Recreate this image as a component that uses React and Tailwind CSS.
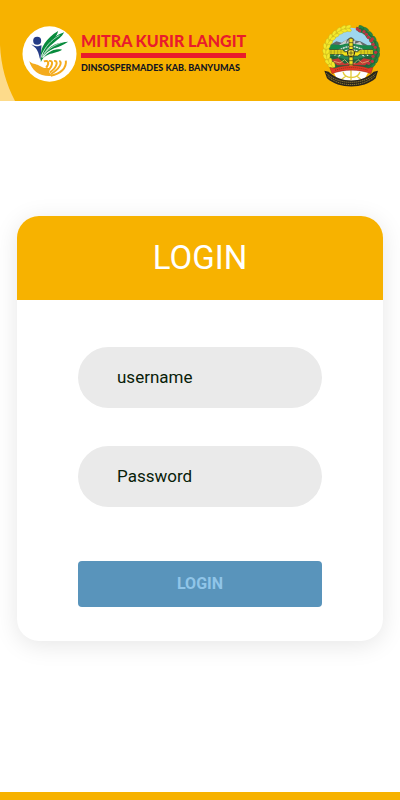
import { useState } from 'react';

const GRAINS = [
  [118, 40, 85], [104, 42, 72], [91, 48, 60], [78, 57, 48], [67, 67, 36], [58, 80, 24],
  [51, 93, 12], [49, 108, 0], [51, 123, -9], [57, 138, -22], [66, 150, -34],
];

const BERRIES = [
  [143, 42], [150, 47], [163, 50], [170, 58], [176, 67], [184, 77], [188, 72], [190, 88],
  [197, 97], [198, 112], [190, 124], [188, 139], [177, 145],
];

const LEAVES = [
  [153, 42, 25], [166, 48, 35], [178, 60, 50], [189, 74, 62], [196, 89, 75], [200, 104, 88],
  [200, 119, 102], [195, 134, 116], [186, 147, 135],
];

function SocialLogo() {
  return (
    <svg viewBox="68 78 164 168" className="h-14 w-[55px] shrink-0" role="img" aria-label="Dinsospermades">
      <ellipse cx="150" cy="162" rx="81" ry="83" fill="#fff" />
      <circle cx="113" cy="122" r="12" fill="#253c86" />
      <path d="M95 132C101 137 108 139 116 139L126 136L123 181C119 172 119 160 112 149C108 142 100 139 95 132Z" fill="#253c86" />
      <g fill="#078b3c">
        <path d="M125 169C121 145 139 115 176 93C173 106 166 114 156 123C145 133 132 149 125 169Z" />
        <path d="M127 171C133 143 151 111 194 97C187 111 175 119 163 128C148 139 136 153 127 171Z" />
        <path d="M127 174C140 147 160 127 206 125C191 135 178 140 164 145C147 152 137 161 127 174Z" />
        <path d="M126 180C139 160 158 143 188 149C174 158 160 158 149 163C138 168 132 173 126 180Z" />
        <path d="M124 186L124 176L128 166L130 175Z" />
      </g>
      <g fill="none" stroke="#fff" strokeWidth="2">
        <path d="M127 165C138 139 153 122 180 106" />
        <path d="M129 170C143 148 161 136 196 124" />
        <path d="M129 174C143 158 158 147 184 142" />
      </g>
      <path d="M89 182C94 190 105 191 114 194L132 203C137 206 143 200 150 205C144 218 155 227 168 226C128 235 97 215 89 182Z" fill="#f4ab1d" />
      <g fill="none" stroke="#f4ab1d" strokeWidth="6">
        <path d="M133 184C148 179 150 190 140 203" />
        <path d="M149 183C162 180 160 197 147 211" />
        <path d="M164 183C178 181 172 204 151 217" />
        <path d="M179 183C190 185 181 207 154 222" />
        <path d="M199 182C202 204 183 222 154 227" />
      </g>
    </svg>
  );
}

function RegencyEmblem() {
  return (
    <svg viewBox="34 30 177 189" className="h-[63px] w-[59px] shrink-0" role="img" aria-label="Kabupaten Banyumas">
      <clipPath id="shield">
        <circle cx="124" cy="111" r="73" />
      </clipPath>
      <g clipPath="url(#shield)">
        <path d="M45 30H205V110H45Z" fill="#9ed6ee" />
        <path d="M55 94L80 79L96 83L124 66L139 77L152 79L174 91L195 91V120H55Z" fill="#626969" />
        <path d="M85 92L112 73L108 87L122 68L126 80L138 75L135 87L151 80L160 92Z" fill="#c8cfca" />
        <path d="M45 98C75 79 82 97 104 87C132 80 158 99 200 88V190H45Z" fill="#16894a" />
        <path d="M68 138C75 104 97 88 124 88C153 88 176 107 182 138V148H68Z" fill="#278755" />
        <path d="M71 136C79 82 169 80 179 136M82 138C91 93 158 94 168 138" fill="none" stroke="#e9eee5" strokeWidth="4" strokeDasharray="6 2" />
        <path d="M58 125C77 115 98 139 124 133C149 138 172 115 193 125V157H58Z" fill="#21633c" />
        <path d="M65 134L86 130L105 146L122 142L142 145L162 130L185 134L166 151L83 151Z" fill="#c33b34" />
        <path d="M73 139L91 144L105 134L119 148M132 147L145 134L158 144L178 138" stroke="#e7ca87" strokeWidth="2" fill="none" />
      </g>
      <path d="M54 104H98L105 110H144L151 104H191V118H151L144 123H105L98 118H54Z" fill="#f3e51a" stroke="#383724" strokeWidth="2" />
      <path d="M56 111H190M64 105V117M74 105V117M84 105V117M94 105V117M154 105V117M164 105V117M174 105V117M184 105V117" stroke="#514c20" strokeWidth="1" />
      <path d="M118 70H130V163H118Z" fill="#f2e324" stroke="#393725" strokeWidth="2" />
      <path d="M118 83H130M118 94H130M118 104H130M118 126H130M118 137H130M118 148H130" stroke="#393725" strokeWidth="2" />
      <circle cx="124" cy="114" r="11" fill="#f3e330" stroke="#383724" strokeWidth="3" />
      <path d="M113 114H135M124 103V125" stroke="#383724" strokeWidth="2" />
      <path d="M70 167C103 159 146 159 178 167L166 190L143 197H101L80 188Z" fill="#fff" />
      <path d="M100 171C107 193 143 193 151 171M124 163V195M108 184L96 193M142 184L153 193" stroke="#e2cb39" strokeWidth="4" fill="none" />
      <path d="M122 40C76 43 49 79 49 108C50 130 57 143 68 154" fill="none" stroke="#e0cd20" strokeWidth="14" />
      <g fill="#f5ea2b" stroke="#b8a51c" strokeWidth="1">
        {GRAINS.map(([x, y, angle]) => (
          <g key={y} transform={`translate(${x} ${y}) rotate(${angle})`}>
            <ellipse cx="-5" cy="0" rx="5" ry="9" transform="rotate(-20)" />
            <ellipse cx="5" cy="0" rx="5" ry="9" transform="rotate(20)" />
          </g>
        ))}
      </g>
      <path d="M140 39C185 47 205 85 201 119C198 139 189 151 175 159" fill="none" stroke="#24713b" strokeWidth="8" />
      <g fill="#268744" stroke="#185b32" strokeWidth="1">
        {LEAVES.map(([x, y, angle]) => (
          <g key={y} transform={`translate(${x} ${y}) rotate(${angle})`}>
            <ellipse cx="0" cy="-6" rx="9" ry="4" />
            <ellipse cx="0" cy="6" rx="9" ry="4" />
          </g>
        ))}
      </g>
      {BERRIES.map(([x, y]) => (
        <circle key={`${x}-${y}`} cx={x} cy={y} r="5" fill="#bf3341" />
      ))}
      <path d="M44 167L57 170C91 205 159 205 192 170L205 167L198 190C162 223 87 223 52 190Z" fill="#29251c" />
      <path d="M50 175C88 211 160 211 199 175M54 184C92 217 157 217 195 184" fill="none" stroke="#bfa43a" strokeWidth="2" strokeDasharray="4 2" />
      <path d="M60 157L74 160C105 149 145 149 176 160L190 157L184 176C148 162 103 162 67 176Z" fill="#e43b25" stroke="#5d2b1d" strokeWidth="1" />
      <path d="M76 166C107 155 143 155 175 166" fill="none" stroke="#572c1c" strokeWidth="2" strokeDasharray="3 3" />
    </svg>
  );
}

function Field({ label, type, value, onChange }) {
  return (
    <input
      type={type}
      value={value}
      aria-label={label}
      placeholder={label}
      onChange={(e) => onChange(e.target.value)}
      className="block h-[61px] w-full rounded-full bg-[#eaeaea] px-[39px] text-[17px] text-[#082008] outline-none placeholder:text-[#082008]"
    />
  );
}

export default function App() {
  const [username, setUsername] = useState('');
  const [password, setPassword] = useState('');

  return (
    <div className="flex min-h-screen flex-col bg-white font-[Roboto,sans-serif]">
      <header className="relative flex h-[101px] items-center justify-between overflow-hidden bg-[#f7b200] pt-3 pr-5 pl-[22px]">
        <svg viewBox="0 0 16 101" className="absolute bottom-0 left-0 h-full w-4" aria-hidden="true">
          <path d="M0 45C1 66 6 84 15 101H0Z" fill="#fddb8b" />
        </svg>
        <div className="mb-1.5 flex items-center gap-1">
          <SocialLogo />
          <div className="font-[Lato,sans-serif] font-black whitespace-nowrap">
            <p className="text-[16px] leading-6 text-[#e91b2c]">MITRA KURIR LANGIT</p>
            <div className="h-[5px] bg-[#e91b2c]" />
            <p className="text-[9px] leading-5 text-[#111522]">DINSOSPERMADES KAB. BANYUMAS</p>
          </div>
        </div>
        <RegencyEmblem />
      </header>

      <main className="flex flex-1 flex-col justify-center px-[17px] pb-[37px]">
        <form
          onSubmit={(e) => e.preventDefault()}
          className="overflow-hidden rounded-[22px] bg-white shadow-[0_4px_24px_rgba(0,0,0,0.1)]"
        >
          <div className="flex h-[84px] items-center justify-center bg-[#f7b200]">
            <h1 className="text-[33px] text-white">LOGIN</h1>
          </div>
          <div className="flex flex-col gap-[38px] px-[61px] pt-[47px] pb-[34px]">
            <Field label="username" type="text" value={username} onChange={setUsername} />
            <Field label="Password" type="password" value={password} onChange={setPassword} />
            <button type="submit" className="mt-4 h-[46px] rounded bg-[#5994bb] text-[16px] font-bold text-[#90c5e8]">
              LOGIN
            </button>
          </div>
        </form>
      </main>

      <footer className="h-2 bg-[#f7b200]" />
    </div>
  );
}
